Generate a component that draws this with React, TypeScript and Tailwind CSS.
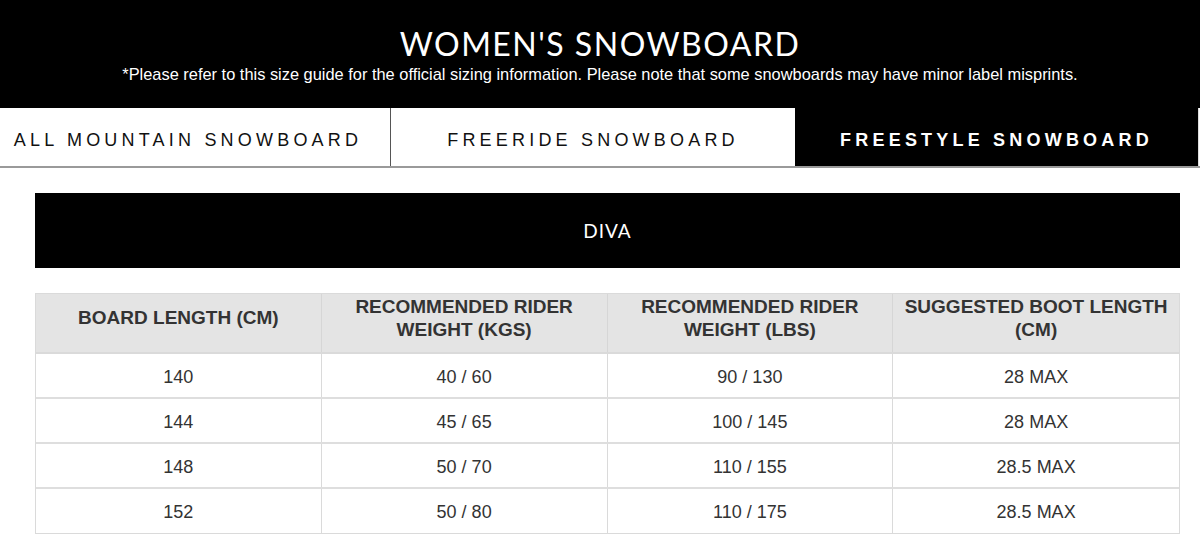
import React from 'react';

const rows = [
  ['140', '40 / 60', '90 / 130', '28 MAX'],
  ['144', '45 / 65', '100 / 145', '28 MAX'],
  ['148', '50 / 70', '110 / 155', '28.5 MAX'],
  ['152', '50 / 80', '110 / 175', '28.5 MAX'],
];

const heads = [
  'BOARD LENGTH (CM)',
  'RECOMMENDED RIDER WEIGHT (KGS)',
  'RECOMMENDED RIDER WEIGHT (LBS)',
  'SUGGESTED BOOT LENGTH (CM)',
];

export default function App() {
  return (
    <div className="w-[1200px] h-[553px] bg-white font-['Liberation_Sans',Arial,sans-serif] overflow-hidden">
      {/* Header */}
      <div className="h-[108px] bg-black flex flex-col items-center text-white">
        <h1 className="mt-[25px] text-[32px] leading-[38px] tracking-[1.5px] font-['Lato',sans-serif] font-normal">
          WOMEN'S SNOWBOARD
        </h1>
        <p className="mt-[1px] text-[16.4px] leading-[20px]">
          *Please refer to this size guide for the official sizing information. Please note that some snowboards may have minor label misprints.
        </p>
      </div>

      {/* Tabs */}
      <div className="flex h-[60px] border-b-2 border-[#9a9a9a]">
        <div className="w-[391px] flex items-center justify-center pt-[6px] pr-[14px] border-r border-[#555] text-[18px] tracking-[4.2px] text-[#111]">
          ALL MOUNTAIN SNOWBOARD
        </div>
        <div className="w-[404px] flex items-center justify-center pt-[6px] text-[18px] tracking-[4.2px] text-[#111]">
          FREERIDE SNOWBOARD
        </div>
        <div className="w-[403px] flex items-center justify-center pt-[6px] bg-black text-white text-[18px] font-bold tracking-[4.2px]">
          FREESTYLE SNOWBOARD
        </div>
        <div className="flex-1 border-l border-[#ddd]" />
      </div>

      {/* Content */}
      <div className="ml-[35px] mr-[20px] mt-[25px]">
        <div className="h-[75px] bg-black flex items-center justify-center pt-[1px] text-white text-[19px] tracking-[1px] font-['Lato',sans-serif]">
          DIVA
        </div>

        <div className="mt-[25px] border border-[#dadada]">
          <div className="grid grid-cols-4 h-[60px] bg-[#e4e4e4] border-b-2 border-[#dadada]">
            {heads.map((h, i) => (
              <div
                key={h}
                className={`flex items-center justify-center text-center px-1 pb-[11px] text-[19px] leading-[23px] font-bold text-[#333] ${i < 3 ? 'border-r border-[#d6d6d6]' : ''}`}
              >
                {h}
              </div>
            ))}
          </div>
          {rows.map((r, ri) => (
            <div
              key={r[0]}
              className={`grid grid-cols-4 ${ri < rows.length - 1 ? 'h-[45px] border-b-2 border-[#dedede]' : 'h-[44px]'}`}
            >
              {r.map((c, i) => (
                <div
                  key={i}
                  className={`flex items-center justify-center pt-[3px] text-[18px] text-[#333] ${i < 3 ? 'border-r border-[#dadada]' : ''}`}
                >
                  {c}
                </div>
              ))}
            </div>
          ))}
        </div>
      </div>
    </div>
  );
}
